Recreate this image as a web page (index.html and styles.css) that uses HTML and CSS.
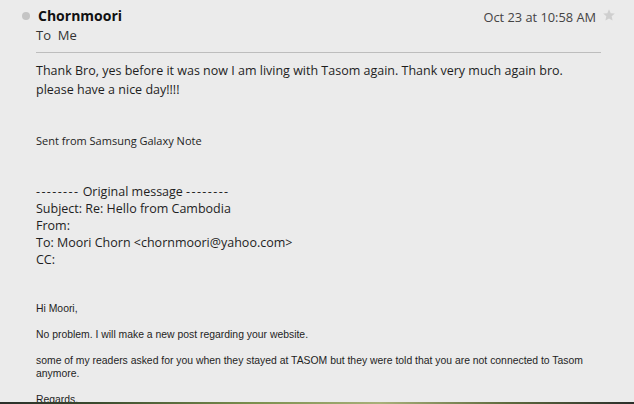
FILE: index.html
```html
<!DOCTYPE html>
<html>
<head>
<meta charset="utf-8">
<link rel="stylesheet" href="styles.css">
</head>
<body>
<div class="page">
  <header class="head">
    <div class="head-row">
      <span class="dot"></span>
      <span class="sender">Chornmoori</span>
      <span class="date">Oct 23 at 10:58 AM</span>
      <svg class="star" width="14" height="14" viewBox="0 0 24 24"><path d="M12 2l2.9 6.9 7.1.6-5.4 4.7 1.6 7.3L12 17.8 5.8 21.5l1.6-7.3L2 9.5l7.1-.6z" fill="#cfcfcf"/></svg>
    </div>
    <div class="to">To&nbsp; Me</div>
  </header>
  <div class="body">
    <p class="msg">Thank Bro, yes before it was now I am living with Tasom again. Thank very much again bro. please have a nice day!!!!</p>
    <p class="sent">Sent from Samsung Galaxy Note</p>
    <div class="orig">
      <div><span class="dashes">--------</span> Original message <span class="dashes">--------</span></div>
      <div>Subject: Re: Hello from Cambodia</div>
      <div>From:</div>
      <div>To: Moori Chorn &lt;chornmoori@yahoo.com&gt;</div>
      <div>CC:</div>
    </div>
    <div class="quote">
      <p>Hi Moori,</p>
      <p>No problem. I will make a new post regarding your website.</p>
      <p>some of my readers asked for you when they stayed at TASOM but they were told that you are not connected to Tasom anymore.</p>
      <p>Regards,</p>
    </div>
  </div>
</div>
<div class="taskbar"></div>
</body>
</html>
```
FILE: styles.css
```css
html, body {
  margin: 0;
  padding: 0;
  background: #ebebeb;
  width: 634px;
  height: 404px;
  overflow: hidden;
  position: relative;
}
.page {
  padding: 6px 0 0 36px;
  color: #1a1a1a;
  font-family: "Open Sans", "Noto Sans", sans-serif;
}
.head {
  width: 565px;
  border-bottom: 1px solid #bdbdbd;
  padding-bottom: 8px;
}
.head-row {
  display: flex;
  align-items: center;
  height: 18px;
  position: relative;
}
.dot {
  position: absolute;
  left: -14px;
  top: 6px;
  width: 8px;
  height: 8px;
  border-radius: 50%;
  background: #c4c4c4;
}
.sender {
  font-weight: 700;
  font-size: 14px;
  color: #111;
  margin-left: 2px;
}
.date {
  margin-left: auto;
  font-size: 12.8px;
  color: #444;
  margin-right: 5px;
  position: relative;
  top: 2px;
}
.star {
  position: absolute;
  right: -15px;
  top: 2px;
}
.to {
  font-size: 13px;
  color: #333;
  margin-top: 2px;
  line-height: 18px;
}
.body {
  padding-top: 8px;
}
.msg {
  margin: 0;
  width: 560px;
  font-size: 12.5px;
  line-height: 19px;
  color: #1e1e1e;
}
.sent {
  margin: 35px 0 0;
  font-size: 11px;
  line-height: 14px;
  color: #1e1e1e;
}
.orig {
  margin-top: 35px;
  font-size: 12.5px;
  line-height: 17px;
  color: #1e1e1e;
}
.dashes {
  letter-spacing: 1.4px;
}
.quote {
  margin-top: 34px;
  font-family: "Liberation Sans", Arial, sans-serif;
  font-size: 10.4px;
  color: #1e1e1e;
}
.quote p {
  margin: 0 0 13px;
  line-height: 13px;
  width: 570px;
}
.taskbar {
  position: absolute;
  left: 0;
  right: 0;
  bottom: 0;
  height: 2px;
  background: linear-gradient(90deg, #2a2f2a 0%, #3a4a2e 15%, #7b8f4e 40%, #a8b07a 60%, #5e6a3e 80%, #2b2e2b 100%);
}
```
